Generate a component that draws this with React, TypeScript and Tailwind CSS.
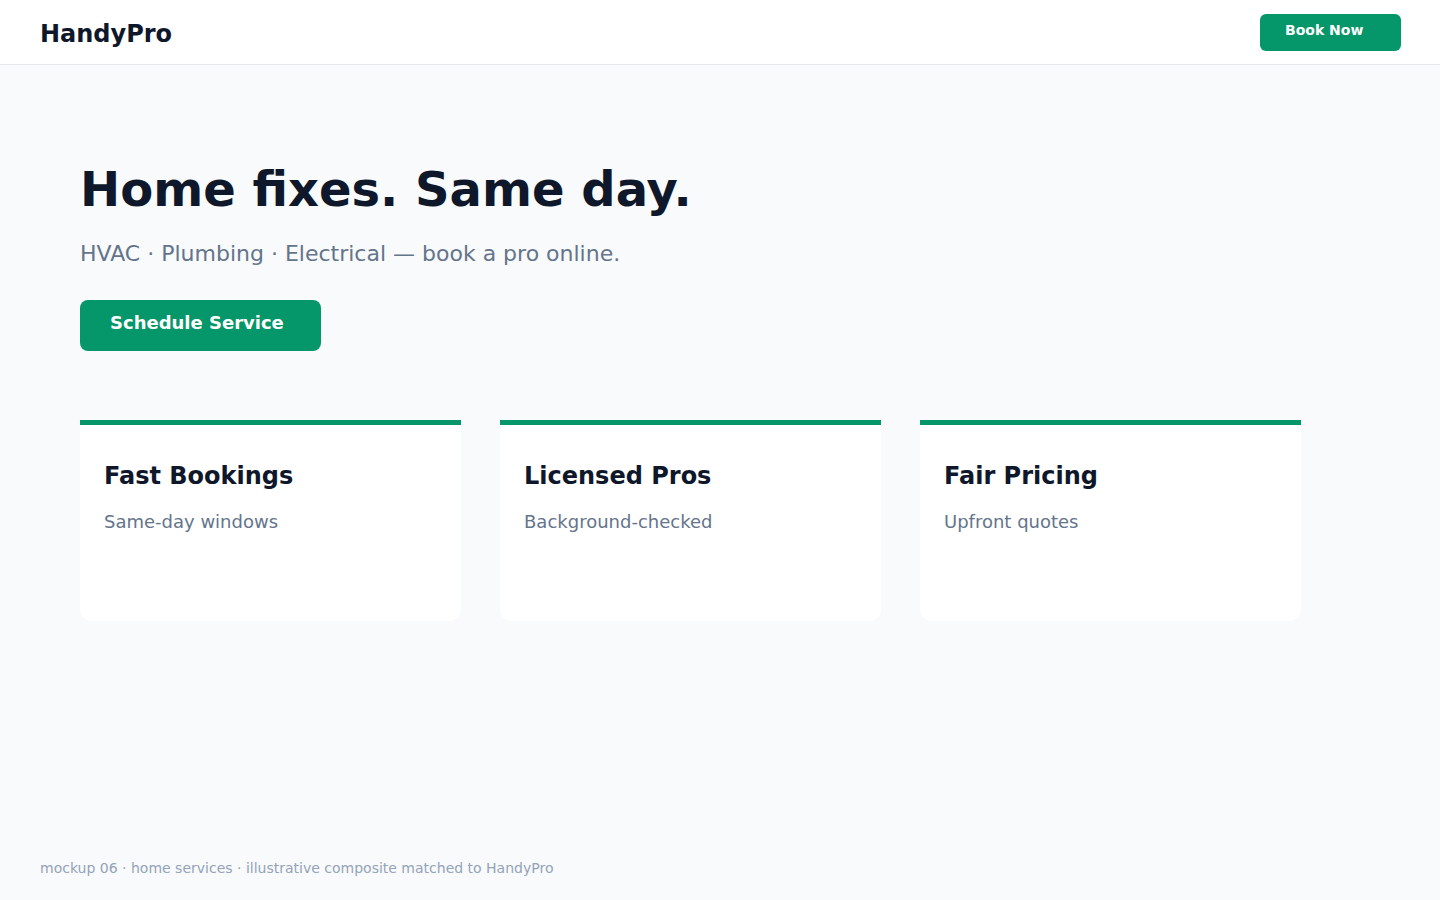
const features = [
  { title: 'Fast Bookings', body: 'Same-day windows' },
  { title: 'Licensed Pros', body: 'Background-checked' },
  { title: 'Fair Pricing', body: 'Upfront quotes' },
];

export default function App() {
  return (
    <div className="min-h-screen flex flex-col bg-[#f8fafc] text-[#0f172a] font-['DejaVu_Sans',sans-serif]">
      <header className="h-[65px] bg-white border-b border-[#e2e8f0] flex items-center justify-between pl-10 pr-[39px]">
        <span className="mt-[3px] text-[24px] font-bold leading-8">HandyPro</span>
        <button className="h-[37px] w-[141px] rounded-md bg-[#059669] text-white text-[14px] font-bold leading-5 flex items-center pl-[25px] pb-[5px]">
          Book Now
        </button>
      </header>

      <main className="px-20 pt-24">
        <h1 className="text-[48px] font-bold leading-[1.2]">Home fixes. Same day.</h1>
        <p className="mt-[18px] text-[22px] leading-[1.5] text-[#64748b]">
          HVAC · Plumbing · Electrical — book a pro online.
        </p>
        <button className="mt-[30px] h-[51px] w-[241px] rounded-lg bg-[#059669] text-white text-[18px] font-bold leading-7 flex items-start pt-[9px] pl-[30px]">
          Schedule Service
        </button>

        <div className="mt-[69px] w-[1221px] grid grid-cols-3 gap-[39px]">
          {features.map((f) => (
            <div key={f.title} className="h-[201px] bg-white border-t-[5px] border-[#059669] rounded-b-xl px-6 pt-[35px]">
              <h3 className="text-[24px] font-bold leading-8">{f.title}</h3>
              <p className="mt-[16px] text-[18px] leading-[1.5] text-[#64748b]">{f.body}</p>
            </div>
          ))}
        </div>
      </main>

      <footer className="mt-auto px-10 pb-[22px] text-[14px] leading-5 text-[#94a3b8]">
        mockup 06 · home services · illustrative composite matched to HandyPro
      </footer>
    </div>
  );
}
